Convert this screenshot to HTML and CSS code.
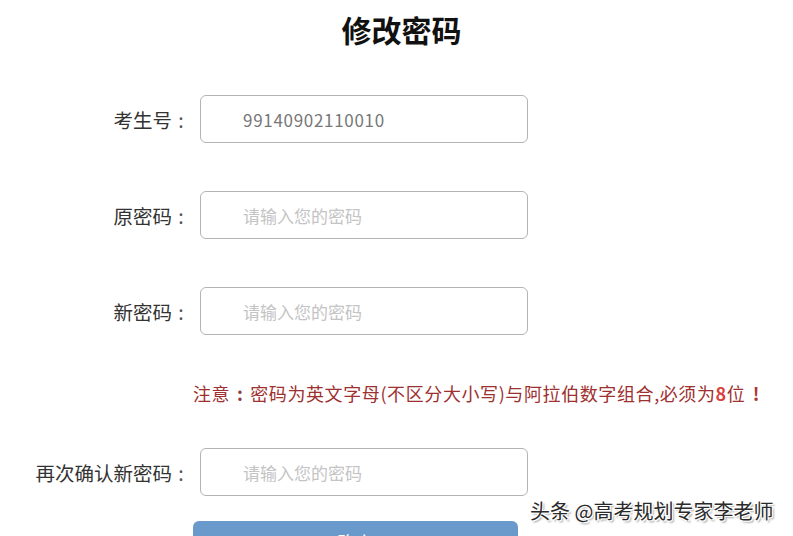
FILE: index.html
```html
<!DOCTYPE html>
<html lang="zh-CN">
<head>
  <meta charset="UTF-8" />
  <title>修改密码</title>
  <link rel="stylesheet" href="styles.css">
</head>
<body>
  <h1 class="title">修改密码</h1>
  <div class="form">
    <div class="field">
      <span class="label">考生号<span class="colon">:</span></span>
      <input type="text" class="box id" value="99140902110010" />
    </div>
    <div class="field">
      <span class="label">原密码<span class="colon">:</span></span>
      <input type="password" class="box" placeholder="请输入您的密码" />
    </div>
    <div class="field">
      <span class="label">新密码<span class="colon">:</span></span>
      <input type="password" class="box" placeholder="请输入您的密码" />
    </div>
    <p class="notice">注意<span class="colon">:</span>密码为英文字母(不区分大小写)与阿拉伯数字组合,必须为<b>8</b>位<span class="bang">!</span></p>
    <div class="field confirm">
      <span class="label">再次确认新密码<span class="colon">:</span></span>
      <input type="password" class="box" placeholder="请输入您的密码" />
    </div>
    <button class="submit">确定</button>
  </div>
  <div class="watermark">头条 @高考规划专家李老师</div>
</body>
</html>
```

FILE: styles.css
```css
/* Base styles */
body {
  margin: 0;
  background-color: #fff;
  color: #222;
  font-family: "Noto Sans CJK SC", "Liberation Sans", sans-serif;
  height: 536px;
  overflow: hidden;
  position: relative;
}
.title {
  margin: 0;
  height: 58px;
  line-height: 58px;
  font-size: 30px;
  font-weight: 700;
  text-align: center;
  padding-left: 10px;
  color: #111;
}

/* Form rows */
.form {
  display: flex;
  flex-direction: column;
  padding-top: 37px;
}
.field {
  display: flex;
  align-items: center;
  height: 48px;
  margin-bottom: 48px;
}
.field .label {
  width: 190px;
  text-align: right;
  font-size: 19.5px;
  color: #333;
  margin-right: 10px;
  white-space: nowrap;
}
.colon {
  display: inline-block;
  width: 18px;
  text-align: center;
  color: #555;
}
.box {
  box-sizing: border-box;
  width: 328px;
  height: 48px;
  border: 1px solid #b4b4b4;
  border-radius: 6px;
  padding: 0 0 0 42px;
  font-family: inherit;
  font-size: 17px;
  color: #777;
  background: #fff;
  outline: none;
}
.box.id {
  letter-spacing: 0.7px;
}
.box::placeholder {
  color: #c4c4c4;
  letter-spacing: 0;
}
.field:nth-child(3) {
  margin-bottom: 0;
}

/* Red notice line */
.notice {
  margin: 46px 0 43px 193px;
  height: 24px;
  line-height: 24px;
  font-size: 18px;
  letter-spacing: 0.6px;
  color: #9e3030;
  white-space: nowrap;
}
.notice .colon {
  width: 20px;
  color: #8a4040;
  font-weight: 700;
}
.notice b {
  color: #d8403c;
}
.notice .bang {
  display: inline-block;
  width: 22px;
  text-align: center;
  font-weight: 700;
  color: #b03434;
}
.field.confirm {
  margin-bottom: 25px;
}
.submit {
  margin-left: 193px;
  width: 325px;
  height: 42px;
  border: none;
  border-radius: 6px;
  background-color: #6a9acb;
  color: #fff;
  font-family: inherit;
  font-size: 18px;
}

/* Watermark overlay */
.watermark {
  position: absolute;
  left: 530px;
  top: 496px;
  font-size: 20px;
  color: #2a2a2a;
  white-space: nowrap;
  text-shadow: 1px 1px 0 #fff, -1px -1px 0 #fff, 1px -1px 0 #fff, -1px 1px 0 #fff, 2px 2px 2px #999;
}
```
